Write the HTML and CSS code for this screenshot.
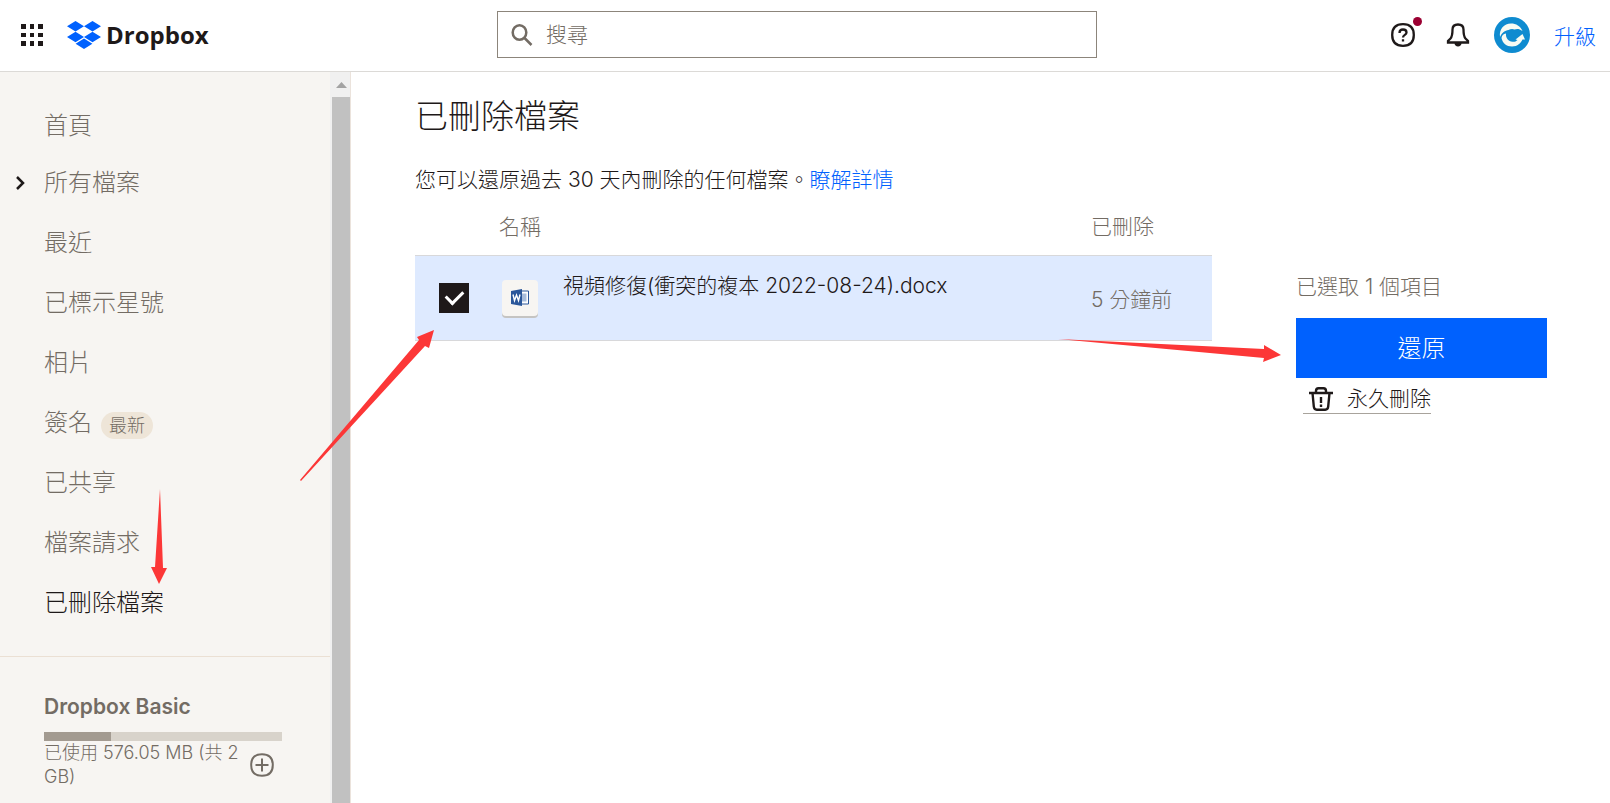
FILE: index.html
```html
<!DOCTYPE html>
<html lang="zh-Hant">
    <head>
        <meta charset="utf-8">
        <title>已刪除檔案 - Dropbox</title>
        <link rel="stylesheet" href="styles.css">
    </head>
    <body>
        <header class="topbar">
            <div class="brand">
                <button class="icon_button" type="button" aria-label="應用程式">
                    <svg width="22" height="22" viewBox="0 0 22 22" fill="#1e1919">
                        <path d="M0 0h5v5H0zM9 0h4v5H9zM17 0h5v5h-5zM0 9h5v4H0zM9 9h4v4H9zM17 9h5v4h-5zM0 17h5v5H0zM9 17h4v5H9zM17 17h5v5h-5z"/>
                    </svg>
                </button>
                <a class="logo" href="#">
                    <svg width="34" height="28" viewBox="0 0 34 28" fill="#0061fe">
                        <path d="M8.500 0l8.500 5.300-8.500 5.300L0 5.300zM25.500 0L34 5.300l-8.500 5.300L17 5.300zM8.500 10.700l8.500 5.300-8.500 5.300L0 16zM25.500 10.700L34 16l-8.500 5.300L17 16zM17 17.600l8.400 5.200L17 28l-8.400-5.200z"/>
                    </svg>
                    <span>Dropbox</span>
                </a>
            </div>
            <label class="search">
                <svg width="22" height="22" viewBox="0 0 22 22" fill="none" stroke="#736c64" stroke-width="2.500">
                    <ellipse cx="8.500" cy="8.500" rx="6.800" ry="7.200"/>
                    <path d="M13 13.500l7.500 7.500"/>
                </svg>
                <input type="text" placeholder="搜尋" aria-label="搜尋">
            </label>
            <div class="account">
                <button class="icon_button help" type="button" aria-label="說明">
                    <svg width="24" height="24" viewBox="0 0 24 24" fill="none" stroke="#1e1919" stroke-width="2.300">
                        <path d="M12 1.200C19.500 1.200 22.800 4.500 22.800 12S19.500 22.800 12 22.800 1.200 19.500 1.200 12 4.500 1.200 12 1.200z"/>
                        <path d="M8.500 10c0-2.400 1.300-3.500 3.500-3.500s3.500 1.200 3.500 3c0 2.500-3.500 2.200-3.500 5M12 16.200v2.400"/>
                    </svg>
                    <span class="dot"></span>
                </button>
                <button class="icon_button" type="button" aria-label="通知">
                    <svg width="24" height="24" viewBox="0 0 24 24" fill="none" stroke="#1e1919" stroke-width="2.300">
                        <path d="M2 19.500v-1.500l2.500-2.500C5.800 14 6.500 9.500 6.500 6.500 6.500 3 8.500 1.500 12 1.500s5.500 1.500 5.500 5c0 3 .7 7.500 2 9L22 18v1.500z"/>
                        <path d="M8.500 20h7c0 2-1.500 3.500-3.500 3.500S8.500 22 8.500 20z" fill="#1e1919" stroke="none"/>
                    </svg>
                </button>
                <button class="icon_button" type="button" aria-label="帳戶">
                    <svg width="36" height="36" viewBox="0 0 36 36">
                        <circle cx="18" cy="18" r="18" fill="#0e8bd0"/>
                        <path d="M6 20C5 12 10 6.500 17 6.500c5 0 9.500 2.500 11.500 7.500-3-2.500-6-2.500-8-1.500-1.500-.8-4-.8-6 .5C11 13.500 8 15.500 6 20z" fill="#f7fbf3"/>
                        <path d="M12 16.500C9 17 8 18.500 7.500 21c1 5 5 8.500 10.500 8.500S27 26 28.500 22.500h2.500L28.500 17 21.500 22.500l2 .5c-1.500 1.500-3 2-5 1.800-4-.3-7-3.800-6.500-8.300z" fill="#f7fbf3"/>
                    </svg>
                </button>
                <a class="upgrade" href="#">升級</a>
            </div>
        </header>
        <div class="page">
            <aside class="sidebar">
                <div class="sidebar_body">
                    <nav>
                        <ul class="nav">
                            <li><a href="#">首頁</a></li>
                            <li>
                                <svg class="chevron" width="9" height="14" viewBox="0 0 9 14" fill="none" stroke="#1e1919" stroke-width="2.500">
                                    <path d="M1 1l6 6-6 6"/>
                                </svg>
                                <a href="#">所有檔案</a>
                            </li>
                            <li><a href="#">最近</a></li>
                            <li><a href="#">已標示星號</a></li>
                            <li><a href="#">相片</a></li>
                            <li><a href="#">簽名</a><span class="badge">最新</span></li>
                            <li><a href="#">已共享</a></li>
                            <li><a href="#">檔案請求</a></li>
                            <li><a class="current" href="#">已刪除檔案</a></li>
                        </ul>
                    </nav>
                    <div class="plan">
                        <h2>Dropbox Basic</h2>
                        <div class="quota"><div class="quota_used" style="width:28%"></div></div>
                        <div class="usage">
                            <span>已使用 576.05 MB (共 2 GB)</span>
                            <button class="icon_button" type="button" aria-label="新增空間">
                                <svg width="24" height="24" viewBox="0 0 24 24" fill="none" stroke="#736c64" stroke-width="2">
                                    <path d="M12 1.200C19.500 1.200 22.800 4.500 22.800 12S19.500 22.800 12 22.800 1.200 19.500 1.200 12 4.500 1.200 12 1.200zM12 5.500v13M5.500 12h13"/>
                                </svg>
                            </button>
                        </div>
                    </div>
                </div>
                <div class="scrollbar">
                    <svg width="11" height="6" viewBox="0 0 11 6" fill="#a3a3a3"><path d="M5.500 0L11 6H0z"/></svg>
                    <div class="thumb"></div>
                </div>
            </aside>
            <main class="content">
                <h1>已刪除檔案</h1>
                <p class="intro">您可以還原過去 30 天內刪除的任何檔案。<a href="#">瞭解詳情</a></p>
                <div class="columns">
                    <table class="files">
                        <thead>
                            <tr>
                                <th class="col_check"></th>
                                <th class="col_icon">名稱</th>
                                <th></th>
                                <th class="col_date">已刪除</th>
                            </tr>
                        </thead>
                        <tbody>
                            <tr>
                                <td class="col_check"><input type="checkbox" aria-label="選取檔案" checked></td>
                                <td class="col_icon">
                                    <div class="file_icon">
                                        <svg width="18" height="18" viewBox="0 0 18 18">
                                            <path d="M9 2h8.500v13H9z" fill="#fff" stroke="#2b579a"/>
                                            <path d="M11 4.500h4.500v8H11z" fill="#a9bddb"/>
                                            <path d="M0 2l11-2v17L0 15z" fill="#2b579a"/>
                                            <path d="M2 5.500l1.500 6 2-5.500 2 5.500L9 5.500" fill="none" stroke="#fff" stroke-width="1.400"/>
                                        </svg>
                                    </div>
                                </td>
                                <td class="col_name">視頻修復(衝突的複本 2022-08-24).docx</td>
                                <td class="col_date">5 分鐘前</td>
                            </tr>
                        </tbody>
                    </table>
                    <div class="actions">
                        <p>已選取 1 個項目</p>
                        <button class="restore" type="button">還原</button>
                        <button class="remove" type="button">
                            <svg width="24" height="24" viewBox="0 0 24 24" fill="none" stroke="#1e1919" stroke-width="2.400">
                                <path d="M0 6h24M7 6V4c0-1.800 1-2.700 2.500-2.700h5C16 1.300 17 2.200 17 4v2M3.500 6l1.300 13.500c.2 2.300 1 3.200 3 3.200h8.400c2 0 2.800-.9 3-3.200L20.500 6M12 10v6M12 17.500V20"/>
                            </svg>
                            永久刪除
                        </button>
                    </div>
                </div>
            </main>
        </div>
        <!-- arrows drawn over the page -->
        <svg class="arrows" width="1610" height="803" viewBox="0 0 1610 803" fill="#fc3737">
            <path d="M160 489l3 79h4l-8 16-8-17h4z"/>
            <path d="M300 480L419 340l-2-3 17-7-5 18-4-2L301 481z"/>
            <path d="M1058 339l206 10v-4l17 10-18 7 1-4z"/>
        </svg>
    </body>
</html>
```

FILE: styles.css
```css
*
{
    box-sizing:border-box;
}
body
{
    margin:0;
    min-height:100vh;
    display:flex;
    flex-direction:column;
    color:#1e1919;
    background:#fff;
    font-family:Inter,"Noto Sans CJK TC",sans-serif;
    font-size:21px;
    font-weight:300;
}
a
{
    color:#0061fe;
    text-decoration:none;
}
h1, h2, p, ul
{
    margin:0;
    padding:0;
}
svg
{
    display:block;
    flex:none;
}
button, input
{
    font:inherit;
    color:inherit;
}
.icon_button
{
    position:relative;
    flex:none;
    padding:0;
    border:0;
    background:none;
}
.topbar
{
    display:grid;
    grid-template-columns:476fr 600px 499fr;
    align-items:center;
    height:72px;
    padding:0 14px 2px 21px;
    border-bottom:1px solid #dcdad7;
}
.brand, .logo, .account
{
    display:flex;
    align-items:center;
}
.brand
{
    gap:24px;
}
.logo
{
    gap:5px;
    color:#1e1919;
    font-family:"Open Sans",sans-serif;
    font-size:24px;
    font-weight:700;
    line-height:32px;
}
.search
{
    display:flex;
    align-items:center;
    gap:13px;
    height:47px;
    padding:0 13px;
    border:1px solid #8c857b;
}
.search input
{
    flex:1;
    min-width:0;
    padding:0;
    border:0;
    outline:0;
}
.search input::placeholder
{
    color:#736c64;
}
.account
{
    justify-content:flex-end;
    gap:24px;
}
.help
{
    margin-right:7px;
}
.dot
{
    position:absolute;
    top:-6px;
    right:-7px;
    width:9px;
    height:9px;
    border-radius:50%;
    background:#9b0032;
}
.page
{
    flex:1;
    display:flex;
}
.sidebar
{
    display:flex;
    width:351px;
    border-right:1px solid #ebe3dc;
    background:#f7f5f2;
    color:#736c64;
}
.sidebar_body
{
    flex:1;
}
.nav
{
    padding:27px 0 23px;
    list-style:none;
    font-size:24px;
    line-height:60px;
}
.nav li
{
    display:flex;
    align-items:center;
    position:relative;
    height:60px;
    padding-left:44px;
}
.nav li:first-child
{
    height:54px;
}
.nav a
{
    color:#736c64;
}
.nav a.current
{
    color:#1e1919;
}
.chevron
{
    position:absolute;
    left:16px;
}
.badge
{
    margin:4px 0 0 9px;
    padding:0 8px;
    border-radius:14px;
    background:#eee5d8;
    font-size:18px;
    line-height:27px;
}
.plan
{
    padding:36px 48px 0 44px;
    border-top:1px solid #ebe0d4;
}
.plan h2
{
    font-size:21px;
    font-weight:600;
    line-height:28px;
}
.quota
{
    height:9px;
    margin-top:11px;
    background:#d8d3cb;
}
.quota_used
{
    height:9px;
    background:#a39b91;
}
.usage
{
    display:flex;
    align-items:center;
    gap:4px;
    padding-right:8px;
    font-size:18px;
    line-height:24px;
}
.usage span
{
    flex:1;
}
.scrollbar
{
    display:flex;
    flex-direction:column;
    align-items:center;
    width:20px;
    padding:10px 0 0 2px;
    background:#f0f0f0;
}
.thumb
{
    flex:1;
    width:100%;
    margin-top:9px;
    background:#c1c1c1;
}
.content
{
    flex:1;
    padding:20px 63px 0 64px;
}
.content h1
{
    font-size:33px;
    font-weight:300;
    line-height:48px;
}
.intro
{
    margin-top:24px;
    line-height:32px;
}
.columns
{
    display:flex;
    align-items:flex-start;
    gap:84px;
}
.files
{
    flex:1;
    border-collapse:collapse;
    table-layout:fixed;
}
.files th
{
    height:59px;
    padding:0;
    color:#736c64;
    font-weight:300;
    text-align:left;
}
.files tbody tr
{
    height:85px;
    border-top:1px solid #d8d8da;
    border-bottom:1px solid #d8d8da;
    background:#deeaff;
}
.files td
{
    padding:0;
}
.col_check
{
    width:84px;
}
.col_icon
{
    width:64px;
}
.files .col_date
{
    width:121px;
    color:#736c64;
}
.files .col_name
{
    padding-bottom:27px;
}
.files input
{
    display:grid;
    place-items:center;
    appearance:none;
    width:30px;
    height:30px;
    margin:0 0 0 24px;
    background:#1e1919;
}
.files input:checked::before
{
    content:"";
    width:8px;
    height:14px;
    margin-bottom:4px;
    border:solid #fff;
    border-width:0 3px 3px 0;
    transform:rotate(45deg);
}
.file_icon
{
    display:grid;
    place-items:center;
    width:36px;
    height:36px;
    margin-left:3px;
    border-radius:4px;
    background:#f7f5f2;
    box-shadow:0 2px 0 #c5c4c2;
}
.actions
{
    width:251px;
    padding-top:75px;
}
.actions p
{
    color:#736c64;
    line-height:32px;
}
.restore
{
    width:100%;
    height:60px;
    margin-top:15px;
    padding:0 0 3px;
    border:0;
    background:#0061fe;
    color:#fff;
    font-size:24px;
}
.remove
{
    display:flex;
    align-items:center;
    gap:14px;
    margin:6px 0 0 7px;
    padding:0 0 0 6px;
    border:0;
    border-bottom:1px solid #a8a39c;
    background:none;
    line-height:29px;
}
.arrows
{
    position:absolute;
    top:0;
    left:0;
    pointer-events:none;
}
```
